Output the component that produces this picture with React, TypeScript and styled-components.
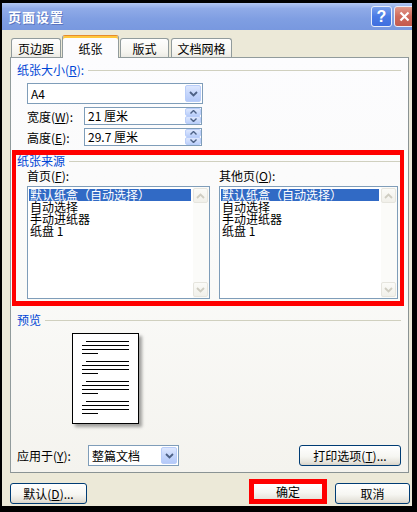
import React from 'react';
import styled, { createGlobalStyle, css } from 'styled-components';

const FONT = `"Noto Sans CJK SC", "Liberation Sans", sans-serif`;

const GlobalStyle = createGlobalStyle`
  html, body { margin: 0; padding: 0; background: #000; }
  body { font-family: ${FONT}; font-size: 12px; }
  * { box-sizing: border-box; }
`;

const Window = styled.div`
  width: 410px;
  height: 503px;
  margin: 3px 0 0 2px;
  background: #ece9d8;
  display: flex;
  flex-direction: column;
  overflow: hidden;
  font-family: ${FONT};
  font-size: 12px;
  color: #000;
`;

const TitleBar = styled.div`
  height: 27px;
  flex-shrink: 0;
  display: flex;
  align-items: center;
  padding-left: 6px;
  background: linear-gradient(180deg, #b2c7f2 0%, #90abe8 20%, #7f9ee2 60%, #7898df 100%);
`;

const TitleText = styled.span`
  color: #fff;
  font-size: 13px;
  font-weight: bold;
  letter-spacing: 1px;
  text-shadow: 1px 1px 0 rgba(50, 70, 150, 0.45);
`;

const CaptionButton = styled.div<{ $kind: 'help' | 'close' }>`
  width: 21px;
  height: 21px;
  flex-shrink: 0;
  border: 1px solid #e8eefc;
  border-radius: 3px;
  display: flex;
  align-items: center;
  justify-content: center;
  color: #fff;
  font-family: "Liberation Sans", sans-serif;
  font-weight: bold;
  font-size: 16px;
  ${(p) =>
    p.$kind === 'help'
      ? css`
          margin-left: auto;
          background: linear-gradient(180deg, #7aa0ee 0%, #4a7be6 50%, #3f6fdf 100%);
        `
      : css`
          margin-left: 2px;
          margin-right: -3px;
          background: linear-gradient(180deg, #e49a8c 0%, #cf6a5c 50%, #c45a4d 100%);
        `}
`;

const TabStrip = styled.div`
  position: relative;
  z-index: 2;
  display: flex;
  align-items: flex-end;
  height: 22px;
  margin-top: 5px;
  padding-left: 9px;
`;

const Tab = styled.div<{ $active?: boolean; $w: number; $ml: number }>`
  width: ${(p) => p.$w}px;
  margin-left: ${(p) => p.$ml}px;
  height: 19px;
  border: 1px solid #919b9c;
  border-bottom: none;
  border-radius: 3px 3px 0 0;
  background: linear-gradient(180deg, #fefefe 0%, #f6f5f0 70%, #ecebe5 100%);
  display: flex;
  align-items: center;
  justify-content: center;
  padding-top: 1px;
  white-space: nowrap;
  ${(p) =>
    p.$active &&
    css`
      height: 23px;
      margin-bottom: -1px;
      background: #fcfcfe;
      border-top: 1px solid #e68b2c;
      box-shadow: inset 0 2px 0 #ffc73c;
      padding-top: 2px;
    `}
`;

const Panel = styled.div`
  margin-left: 8px;
  width: 399px;
  height: 416px;
  flex-shrink: 0;
  border: 1px solid #919b9c;
  border-right-color: #8a9394;
  border-bottom-color: #8a9394;
  background: linear-gradient(180deg, #fcfcfe 0%, #fafaf8 55%, #f4f3ee 100%);
  padding: 6px 7px 6px 6px;
  display: flex;
  flex-direction: column;
`;

const GroupHeader = styled.div`
  display: flex;
  align-items: center;
  height: 12px;
  line-height: 12px;
  color: #0046d5;
  white-space: nowrap;
  &::after {
    content: '';
    flex: 1;
    height: 1px;
    margin-left: 4px;
    background: #d0d0bf;
  }
`;

const SelectBox = styled.div<{ $w: number }>`
  width: ${(p) => p.$w}px;
  height: 21px;
  border: 1px solid #7f9db9;
  background: #fff;
  display: flex;
  align-items: center;
  padding-left: 3px;
  flex-shrink: 0;
`;

const FieldValue = styled.span`
  flex: 1;
  line-height: 14px;
  white-space: nowrap;
`;

const DropButton = styled.div`
  width: 16px;
  height: 17px;
  margin-right: 1px;
  border: 1px solid #b9cdf9;
  border-radius: 2px;
  background: linear-gradient(180deg, #dde7fe 0%, #c5d6fc 50%, #b4c9f8 100%);
  display: flex;
  align-items: center;
  justify-content: center;
`;

const SizeSelectWrap = styled.div`
  margin: 7px 0 0 10px;
`;

const FieldRow = styled.div`
  display: flex;
  align-items: center;
  margin: 3px 0 0 10px;
`;

const FieldLabel = styled.span<{ $w: number }>`
  width: ${(p) => p.$w}px;
  white-space: nowrap;
  flex-shrink: 0;
`;

const NumberInput = styled.div`
  width: 118px;
  height: 18px;
  border: 1px solid #7f9db9;
  background: #fff;
  display: flex;
  align-items: center;
  padding-left: 3px;
`;

const Spinner = styled.div`
  width: 16px;
  height: 16px;
  display: flex;
  flex-direction: column;
`;

const SpinHalf = styled.div`
  flex: 1;
  border: 1px solid #b9cdf9;
  border-radius: 2px;
  background: linear-gradient(180deg, #dde7fe 0%, #bcd0fa 100%);
  display: flex;
  align-items: center;
  justify-content: center;
`;

const RedFrame = styled.div`
  margin: 4px 0 0 -5px;
  width: 392px;
  height: 156px;
  flex-shrink: 0;
  border-style: solid;
  border-color: #ff0000;
  border-width: 5px 4px;
  padding-left: 1px;
  display: flex;
  flex-direction: column;
`;

const SourceColumns = styled.div`
  display: flex;
  gap: 9px;
  margin: 2px 0 0 10px;
`;

const SourceColumn = styled.div<{ $w: number }>`
  width: ${(p) => p.$w}px;
  display: flex;
  flex-direction: column;
`;

const ColLabel = styled.div`
  height: 14px;
  line-height: 14px;
  white-space: nowrap;
`;

const ListBox = styled.div`
  margin-top: 3px;
  height: 113px;
  border: 1px solid #7f9db9;
  background: #fff;
  display: flex;
`;

const ListItems = styled.div`
  flex: 1;
  padding: 2px 2px 0 1px;
`;

const ListItem = styled.div<{ $selected?: boolean }>`
  height: 12px;
  line-height: 12px;
  white-space: nowrap;
  padding-left: 1px;
  ${(p) =>
    p.$selected &&
    css`
      background: #316ac5;
      color: #fff;
    `}
`;

const ScrollBar = styled.div`
  width: 16px;
  display: flex;
  flex-direction: column;
  justify-content: space-between;
  padding: 1px 1px 1px 0;
  background: #fbfbf9;
`;

const ScrollArrow = styled.div`
  height: 15px;
  border: 1px solid #e6e5de;
  border-radius: 2px;
  background: linear-gradient(180deg, #fbfbf8 0%, #f1f0ea 100%);
  display: flex;
  align-items: center;
  justify-content: center;
`;

const PreviewHeaderWrap = styled.div`
  margin-top: 8px;
`;

const PreviewPage = styled.div`
  margin: 7px 0 0 55px;
  width: 67px;
  height: 91px;
  border: 1px solid #000;
  background: #fff;
  box-shadow: 3px 3px 3px rgba(0, 0, 0, 0.35);
  display: flex;
`;

const ApplyRow = styled.div`
  margin-top: auto;
  display: flex;
  align-items: center;
  height: 21px;
`;

const XPButton = styled.div<{ $w: number }>`
  width: ${(p) => p.$w}px;
  height: 21px;
  flex-shrink: 0;
  border: 1px solid #003c74;
  border-radius: 3px;
  background: linear-gradient(180deg, #ffffff 0%, #f6f6f2 55%, #e6e4dc 85%, #d8d3c8 100%);
  display: flex;
  align-items: center;
  justify-content: center;
  white-space: nowrap;
  line-height: 14px;
`;

const PrintButtonWrap = styled.div`
  margin-left: auto;
`;

const DialogButtons = styled.div`
  display: flex;
  align-items: flex-start;
  margin-top: 10px;
  padding-left: 8px;
`;

const OkFrame = styled.div`
  margin: -4px 0 0 162px;
  width: 78px;
  height: 25px;
  border: 5px solid #ff0000;
  background: linear-gradient(180deg, #ffffff 0%, #f6f6f2 55%, #e6e4dc 100%);
  display: flex;
  align-items: center;
  justify-content: center;
  line-height: 14px;
`;

const CancelWrap = styled.div`
  margin-left: 8px;
`;

const Chevron = ({ up, color = '#4d6185' }: { up?: boolean; color?: string }) => (
  <svg width="9" height="6" viewBox="0 0 9 6">
    <path
      d={up ? 'M1 5 L4.5 1.5 L8 5' : 'M1 1 L4.5 4.5 L8 1'}
      fill="none"
      stroke={color}
      strokeWidth="1.8"
    />
  </svg>
);

const SmallArrow = ({ up }: { up?: boolean }) => (
  <svg width="7" height="4" viewBox="0 0 7 4">
    <path d={up ? 'M0.5 3.5 L3.5 0.5 L6.5 3.5' : 'M0.5 0.5 L3.5 3.5 L6.5 0.5'} fill="none" stroke="#4d6185" strokeWidth="1.4" />
  </svg>
);

const CloseGlyph = () => (
  <svg width="11" height="11" viewBox="0 0 11 11">
    <path d="M1.5 1.5 L9.5 9.5 M9.5 1.5 L1.5 9.5" stroke="#fff" strokeWidth="2.2" />
  </svg>
);

const Select = ({ w, value }: { w: number; value: string }) => (
  <SelectBox $w={w}>
    <FieldValue>{value}</FieldValue>
    <DropButton>
      <Chevron />
    </DropButton>
  </SelectBox>
);

const SpinField = ({ value }: { value: string }) => (
  <NumberInput>
    <FieldValue>{value}</FieldValue>
    <Spinner>
      <SpinHalf>
        <SmallArrow up />
      </SpinHalf>
      <SpinHalf>
        <SmallArrow />
      </SpinHalf>
    </Spinner>
  </NumberInput>
);

const trays = ['默认纸盒（自动选择）', '自动选择', '手动进纸器', '纸盘 1'];

const TrayList = () => (
  <ListBox>
    <ListItems>
      {trays.map((t, i) => (
        <ListItem key={t} $selected={i === 0}>
          {t}
        </ListItem>
      ))}
    </ListItems>
    <ScrollBar>
      <ScrollArrow>
        <Chevron up color="#cfcdc2" />
      </ScrollArrow>
      <ScrollArrow>
        <Chevron color="#cfcdc2" />
      </ScrollArrow>
    </ScrollBar>
  </ListBox>
);

const PageLines = () => {
  const groups = [0, 1, 2, 3];
  return (
    <svg width="65" height="89" viewBox="0 0 65 89">
      {groups.map((g) => {
        const y = 7.5 + g * 20;
        return (
          <g key={g} stroke="#000" strokeWidth="1">
            <line x1="13" y1={y} x2="56" y2={y} />
            <line x1="9" y1={y + 4} x2="56" y2={y + 4} />
            <line x1="9" y1={y + 8} x2="56" y2={y + 8} />
            <line x1="9" y1={y + 12} x2="25" y2={y + 12} />
          </g>
        );
      })}
    </svg>
  );
};

export default function App() {
  return (
    <>
      <GlobalStyle />
      <Window>
        <TitleBar>
          <TitleText>页面设置</TitleText>
          <CaptionButton $kind="help">?</CaptionButton>
          <CaptionButton $kind="close">
            <CloseGlyph />
          </CaptionButton>
        </TitleBar>

        <TabStrip>
          <Tab $w={50} $ml={0}>页边距</Tab>
          <Tab $w={57} $ml={1} $active>
            纸张
          </Tab>
          <Tab $w={49} $ml={1}>版式</Tab>
          <Tab $w={61} $ml={2}>文档网格</Tab>
        </TabStrip>

        <Panel>
          <GroupHeader>
            纸张大小(<u>R</u>):
          </GroupHeader>
          <SizeSelectWrap>
            <Select w={176} value="A4" />
          </SizeSelectWrap>
          <FieldRow>
            <FieldLabel $w={57}>
              宽度(<u>W</u>):
            </FieldLabel>
            <SpinField value="21 厘米" />
          </FieldRow>
          <FieldRow>
            <FieldLabel $w={57}>
              高度(<u>E</u>):
            </FieldLabel>
            <SpinField value="29.7 厘米" />
          </FieldRow>

          <RedFrame>
            <GroupHeader>纸张来源</GroupHeader>
            <SourceColumns>
              <SourceColumn $w={183}>
                <ColLabel>
                  首页(<u>F</u>):
                </ColLabel>
                <TrayList />
              </SourceColumn>
              <SourceColumn $w={179}>
                <ColLabel>
                  其他页(<u>O</u>):
                </ColLabel>
                <TrayList />
              </SourceColumn>
            </SourceColumns>
          </RedFrame>

          <PreviewHeaderWrap>
            <GroupHeader>预览</GroupHeader>
          </PreviewHeaderWrap>
          <PreviewPage>
            <PageLines />
          </PreviewPage>

          <ApplyRow>
            <FieldLabel $w={71}>
              应用于(<u>Y</u>):
            </FieldLabel>
            <Select w={91} value="整篇文档" />
            <PrintButtonWrap>
              <XPButton $w={102}>
                打印选项(<u>T</u>)...
              </XPButton>
            </PrintButtonWrap>
          </ApplyRow>
        </Panel>

        <DialogButtons>
          <XPButton $w={77}>
            默认(<u>D</u>)...
          </XPButton>
          <OkFrame>确定</OkFrame>
          <CancelWrap>
            <XPButton $w={75}>取消</XPButton>
          </CancelWrap>
        </DialogButtons>
      </Window>
    </>
  );
}
